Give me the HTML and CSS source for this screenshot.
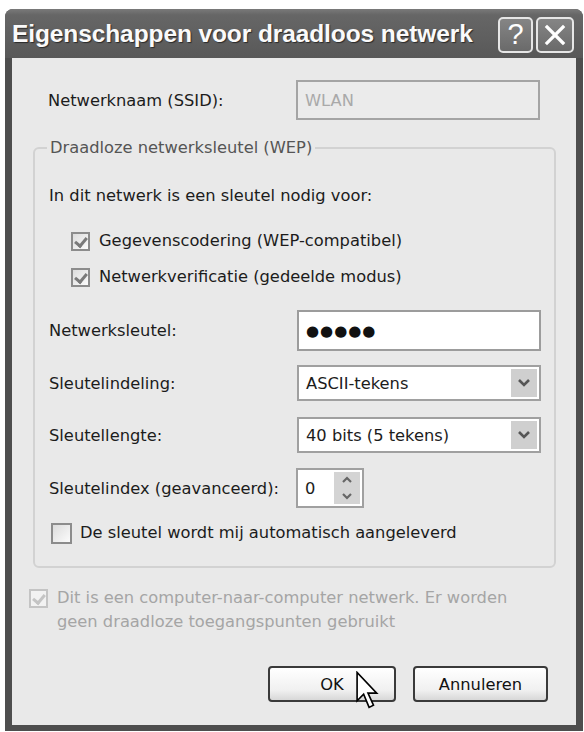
FILE: index.html
```html
<!DOCTYPE html>
<html lang="nl">
<head>
<meta charset="utf-8">
<title>Eigenschappen voor draadloos netwerk</title>
<link rel="stylesheet" href="styles.css">
</head>
<body>
<div class="window">
  <div class="titlebar">
    <span class="title">Eigenschappen voor draadloos netwerk</span>
    <div class="tbtns">
      <div class="tbtn help">?</div>
      <div class="tbtn close">
        <svg width="22" height="22" viewBox="0 0 22 22"><path d="M3 3 L19 19 M19 3 L3 19" stroke="#fff" stroke-width="3.2" stroke-linecap="square" fill="none"/></svg>
      </div>
    </div>
  </div>
  <div class="client">
    <div class="row ssid">
      <span class="label">Netwerknaam (SSID):</span>
      <div class="field disabled">WLAN</div>
    </div>
    <fieldset class="group">
      <legend>Draadloze netwerksleutel (WEP)</legend>
      <p class="intro">In dit netwerk is een sleutel nodig voor:</p>
      <div class="check cb1"><span class="box checked"></span><span>Gegevenscodering (WEP-compatibel)</span></div>
      <div class="check cb2"><span class="box checked"></span><span>Netwerkverificatie (gedeelde modus)</span></div>
      <div class="row key">
        <span class="label">Netwerksleutel:</span>
        <div class="field pw">●●●●●</div>
      </div>
      <div class="row fmt">
        <span class="label">Sleutelindeling:</span>
        <div class="combo"><span class="val">ASCII-tekens</span><span class="arrow"><svg width="14" height="10" viewBox="0 0 14 10"><path d="M2 2 L7 7 L12 2" stroke="#555" stroke-width="2.6" fill="none"/></svg></span></div>
      </div>
      <div class="row len">
        <span class="label">Sleutellengte:</span>
        <div class="combo"><span class="val">40 bits (5 tekens)</span><span class="arrow"><svg width="14" height="10" viewBox="0 0 14 10"><path d="M2 2 L7 7 L12 2" stroke="#555" stroke-width="2.6" fill="none"/></svg></span></div>
      </div>
      <div class="row idx">
        <span class="label">Sleutelindex (geavanceerd):</span>
        <div class="spin"><span class="val">0</span><span class="spinbtns"><span class="sb"><svg width="12" height="8" viewBox="0 0 12 8"><path d="M2 6 L6 2 L10 6" stroke="#666" stroke-width="2.2" fill="none"/></svg></span><span class="sb"><svg width="12" height="8" viewBox="0 0 12 8"><path d="M2 2 L6 6 L10 2" stroke="#666" stroke-width="2.2" fill="none"/></svg></span></span></div>
      </div>
      <div class="check cb3"><span class="box"></span><span>De sleutel wordt mij automatisch aangeleverd</span></div>
    </fieldset>
    <div class="check adhoc"><span class="box checked"></span><span class="adhoc-text">Dit is een computer-naar-computer netwerk. Er worden geen draadloze toegangspunten gebruikt</span></div>
    <div class="buttons">
      <div class="btn ok">OK
        <svg class="cursor" width="24" height="40" viewBox="0 0 22 36"><path d="M1 1 L1 27 L7 21 L12 33 L16 31 L11 20 L19 20 Z" fill="#fff" stroke="#000" stroke-width="1.5" stroke-linejoin="miter"/></svg>
      </div>
      <div class="btn">Annuleren</div>
    </div>
  </div>
</div>
</body>
</html>
```
FILE: styles.css
```css
html, body {
  margin: 0;
  padding: 0;
  background: #ffffff;
}
body {
  font-family: "DejaVu Sans", "Liberation Sans", sans-serif;
  font-size: 16.3px;
  color: #1c1c1c;
}
.window {
  margin: 9px 0 0 5px;
  width: 578px;
  height: 722px;
  box-sizing: border-box;
  background: #4e4e4e;
  border-radius: 8px 8px 0 0;
  display: flex;
  flex-direction: column;
  padding: 0 7px 6px 7px;
}
.titlebar {
  height: 49px;
  margin: 0 -7px;
  padding: 0 9px 0 7px;
  display: flex;
  align-items: center;
  justify-content: space-between;
  background: linear-gradient(#7a7a7a 0%, #666 12%, #5f5f5f 60%, #585858 100%);
  border-radius: 8px 8px 0 0;
}
.title {
  font-family: "Liberation Sans", sans-serif;
  font-weight: bold;
  font-size: 24.5px;
  color: #fafafa;
  text-shadow: 1px 1px 1px #2a2a2a;
  letter-spacing: -0.1px;
}
.tbtns {
  display: flex;
  gap: 3px;
  margin-top: 2px;
}
.tbtn {
  width: 35px;
  height: 36px;
  box-sizing: border-box;
  border: 2px solid #e6e6e6;
  border-radius: 5px;
  background: linear-gradient(#858585, #6a6a6a);
  display: flex;
  align-items: center;
  justify-content: center;
  color: #fff;
  font-family: "Liberation Sans", sans-serif;
  font-size: 29px;
}
.tbtn.close {
  width: 38px;
}
.client {
  flex: 1;
  background: #e9e9e9;
  display: flex;
  flex-direction: column;
}
.row {
  display: flex;
  align-items: center;
}
.label {
  width: 248px;
  flex: none;
}
.ssid {
  margin: 22px 0 0 36px;
}
.field {
  width: 244px;
  height: 40px;
  box-sizing: border-box;
  border: 2px solid #9c9c9c;
  background: #fff;
  display: flex;
  align-items: center;
  padding-left: 7px;
}
.field.disabled {
  background: #ebebeb;
  color: #a9a9a9;
  border-color: #a4a4a4;
}
.group {
  margin: 18px 20px 0 21px;
  padding: 28px 10px 21px 14px;
  border: 2px solid #d2d2d2;
  border-radius: 6px;
  min-width: 0;
}
.group legend {
  padding: 0 3px;
  margin-left: -2px;
  line-height: 20px;
  color: #555;
}
.intro {
  margin: 0;
  line-height: 20px;
}
.check {
  display: flex;
  align-items: center;
  line-height: 24px;
}
.box {
  width: 19px;
  height: 19px;
  box-sizing: border-box;
  border: 2px solid #8c8c8c;
  background: linear-gradient(135deg, #dcdcdc, #fbfbfb);
  flex: none;
  position: relative;
}
.box.checked::after {
  content: "";
  position: absolute;
  left: 4px;
  top: 1px;
  width: 5px;
  height: 9px;
  border: solid #7a7a7a;
  border-width: 0 3px 3px 0;
  transform: rotate(40deg);
}
.cb1 {
  margin-top: 23px;
  margin-left: 22px;
  gap: 9px;
}
.cb2 {
  margin-top: 12px;
  margin-left: 22px;
  gap: 9px;
}
.key {
  margin-top: 21px;
}
.pw {
  height: 41px;
  font-size: 15px;
  letter-spacing: 1px;
  color: #111;
}
.combo {
  width: 244px;
  height: 36px;
  box-sizing: border-box;
  border: 2px solid #a0a0a0;
  background: #fff;
  display: flex;
  align-items: center;
  justify-content: space-between;
  padding: 2px 2px 2px 7px;
}
.combo .arrow {
  width: 26px;
  height: 100%;
  background: #cfcfcf;
  display: flex;
  align-items: center;
  justify-content: center;
}
.fmt {
  margin-top: 14px;
}
.len {
  margin-top: 16px;
}
.idx {
  margin-top: 15px;
}
.idx .label {
  width: 247px;
}
.spin {
  width: 68px;
  height: 40px;
  box-sizing: border-box;
  border: 2px solid #a0a0a0;
  background: #fff;
  display: flex;
  align-items: stretch;
  justify-content: space-between;
  padding: 2px;
}
.spin .val {
  padding-left: 5px;
  display: flex;
  align-items: center;
}
.spinbtns {
  width: 26px;
  display: flex;
  flex-direction: column;
  background: #d4d4d4;
}
.sb {
  flex: 1;
  display: flex;
  align-items: center;
  justify-content: center;
}
.cb3 {
  margin-top: 13px;
  margin-left: 2px;
  gap: 8px;
}
.cb3 .box {
  width: 21px;
  height: 21px;
}
.adhoc {
  margin: 18px 0 0 17px;
  align-items: flex-start;
  gap: 9px;
  color: #a5a5a5;
}
.adhoc .box {
  margin-top: 3px;
  border-color: #c4c4c4;
  background: #f2f2f2;
}
.adhoc .box.checked::after {
  border-color: #c4c4c4;
}
.adhoc-text {
  width: 480px;
}
.buttons {
  margin: 32px 28px 0 0;
  display: flex;
  justify-content: flex-end;
  gap: 17px;
}
.btn {
  width: 128px;
  height: 36px;
  box-sizing: border-box;
  border: 2px solid #3a3a3a;
  border-radius: 4px;
  background: linear-gradient(#ffffff, #f0f0f0 70%, #d8d8d8);
  display: flex;
  align-items: center;
  justify-content: center;
  position: relative;
  color: #111;
}
.btn + .btn {
  width: 135px;
}
.cursor {
  position: absolute;
  left: 86px;
  top: 3px;
}
```
